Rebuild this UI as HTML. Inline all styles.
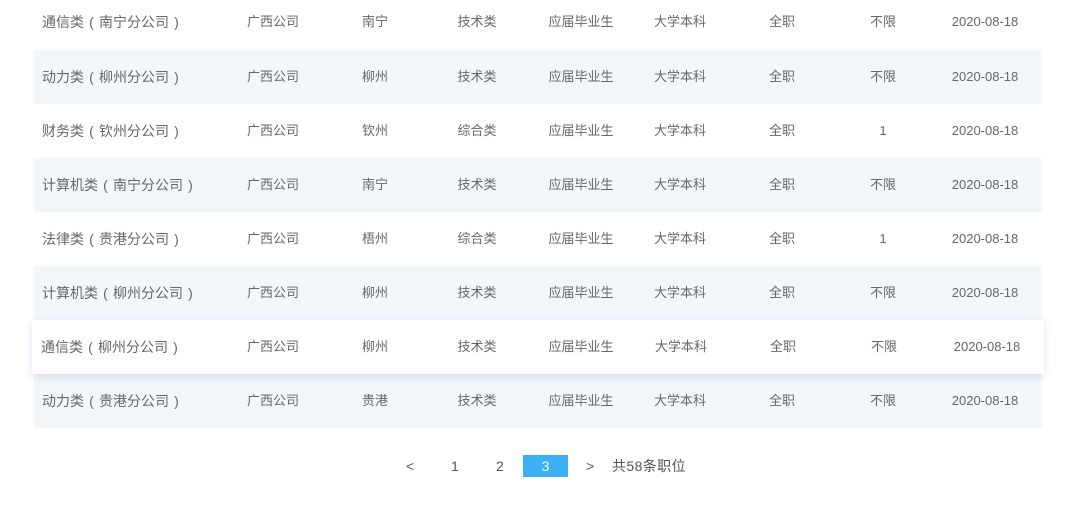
<!DOCTYPE html>
<html><head><meta charset="utf-8"><style>
body{margin:0;width:1066px;height:506px;background:#fff;position:relative;overflow:hidden;font-family:"Liberation Sans","Noto Sans CJK SC",sans-serif;font-size:13px;color:#666;}
.row{position:absolute;left:34px;width:1008px;height:54px;}
.alt{background:#f4f7fa;}
.hov{left:32px;width:1012px;background:#fff;box-shadow:0 3px 8px rgba(150,170,210,0.35);z-index:2;}
.c{position:absolute;top:0;line-height:54px;white-space:nowrap;transform:translateX(-50%);}
.c0{transform:none;font-size:14px;}
.p{display:inline-block;width:15px;text-align:center;}
.pg{position:absolute;top:455px;height:22px;line-height:22px;font-size:14px;color:#555;}
</style></head><body>
<div class="pg" style="left:406px">&lt;</div>
<div class="pg" style="left:451px">1</div>
<div class="pg" style="left:496px">2</div>
<div class="pg" style="left:523px;width:45px;text-align:center;background:#3db0f5;color:#fff">3</div>
<div class="pg" style="left:586px">&gt;</div>
<div class="pg" style="left:612px;letter-spacing:0.4px">共58条职位</div>
<div class="row" style="top:-5px"><span class="c c0" style="left:8px">通信类<span class="p">(</span>南宁分公司<span class="p">)</span></span><span class="c" style="left:239px">广西公司</span><span class="c" style="left:341px">南宁</span><span class="c" style="left:443px">技术类</span><span class="c" style="left:547px">应届毕业生</span><span class="c" style="left:646px">大学本科</span><span class="c" style="left:748px">全职</span><span class="c" style="left:849px">不限</span><span class="c" style="left:951px">2020-08-18</span></div>
<div class="row alt" style="top:50px"><span class="c c0" style="left:8px">动力类<span class="p">(</span>柳州分公司<span class="p">)</span></span><span class="c" style="left:239px">广西公司</span><span class="c" style="left:341px">柳州</span><span class="c" style="left:443px">技术类</span><span class="c" style="left:547px">应届毕业生</span><span class="c" style="left:646px">大学本科</span><span class="c" style="left:748px">全职</span><span class="c" style="left:849px">不限</span><span class="c" style="left:951px">2020-08-18</span></div>
<div class="row" style="top:104px"><span class="c c0" style="left:8px">财务类<span class="p">(</span>钦州分公司<span class="p">)</span></span><span class="c" style="left:239px">广西公司</span><span class="c" style="left:341px">钦州</span><span class="c" style="left:443px">综合类</span><span class="c" style="left:547px">应届毕业生</span><span class="c" style="left:646px">大学本科</span><span class="c" style="left:748px">全职</span><span class="c" style="left:849px">1</span><span class="c" style="left:951px">2020-08-18</span></div>
<div class="row alt" style="top:158px"><span class="c c0" style="left:8px">计算机类<span class="p">(</span>南宁分公司<span class="p">)</span></span><span class="c" style="left:239px">广西公司</span><span class="c" style="left:341px">南宁</span><span class="c" style="left:443px">技术类</span><span class="c" style="left:547px">应届毕业生</span><span class="c" style="left:646px">大学本科</span><span class="c" style="left:748px">全职</span><span class="c" style="left:849px">不限</span><span class="c" style="left:951px">2020-08-18</span></div>
<div class="row" style="top:212px"><span class="c c0" style="left:8px">法律类<span class="p">(</span>贵港分公司<span class="p">)</span></span><span class="c" style="left:239px">广西公司</span><span class="c" style="left:341px">梧州</span><span class="c" style="left:443px">综合类</span><span class="c" style="left:547px">应届毕业生</span><span class="c" style="left:646px">大学本科</span><span class="c" style="left:748px">全职</span><span class="c" style="left:849px">1</span><span class="c" style="left:951px">2020-08-18</span></div>
<div class="row alt" style="top:266px"><span class="c c0" style="left:8px">计算机类<span class="p">(</span>柳州分公司<span class="p">)</span></span><span class="c" style="left:239px">广西公司</span><span class="c" style="left:341px">柳州</span><span class="c" style="left:443px">技术类</span><span class="c" style="left:547px">应届毕业生</span><span class="c" style="left:646px">大学本科</span><span class="c" style="left:748px">全职</span><span class="c" style="left:849px">不限</span><span class="c" style="left:951px">2020-08-18</span></div>
<div class="row hov" style="top:320px"><span class="c c0" style="left:9px">通信类<span class="p">(</span>柳州分公司<span class="p">)</span></span><span class="c" style="left:241px">广西公司</span><span class="c" style="left:343px">柳州</span><span class="c" style="left:445px">技术类</span><span class="c" style="left:549px">应届毕业生</span><span class="c" style="left:649px">大学本科</span><span class="c" style="left:751px">全职</span><span class="c" style="left:852px">不限</span><span class="c" style="left:955px">2020-08-18</span></div>
<div class="row alt" style="top:374px"><span class="c c0" style="left:8px">动力类<span class="p">(</span>贵港分公司<span class="p">)</span></span><span class="c" style="left:239px">广西公司</span><span class="c" style="left:341px">贵港</span><span class="c" style="left:443px">技术类</span><span class="c" style="left:547px">应届毕业生</span><span class="c" style="left:646px">大学本科</span><span class="c" style="left:748px">全职</span><span class="c" style="left:849px">不限</span><span class="c" style="left:951px">2020-08-18</span></div>
</body></html>
